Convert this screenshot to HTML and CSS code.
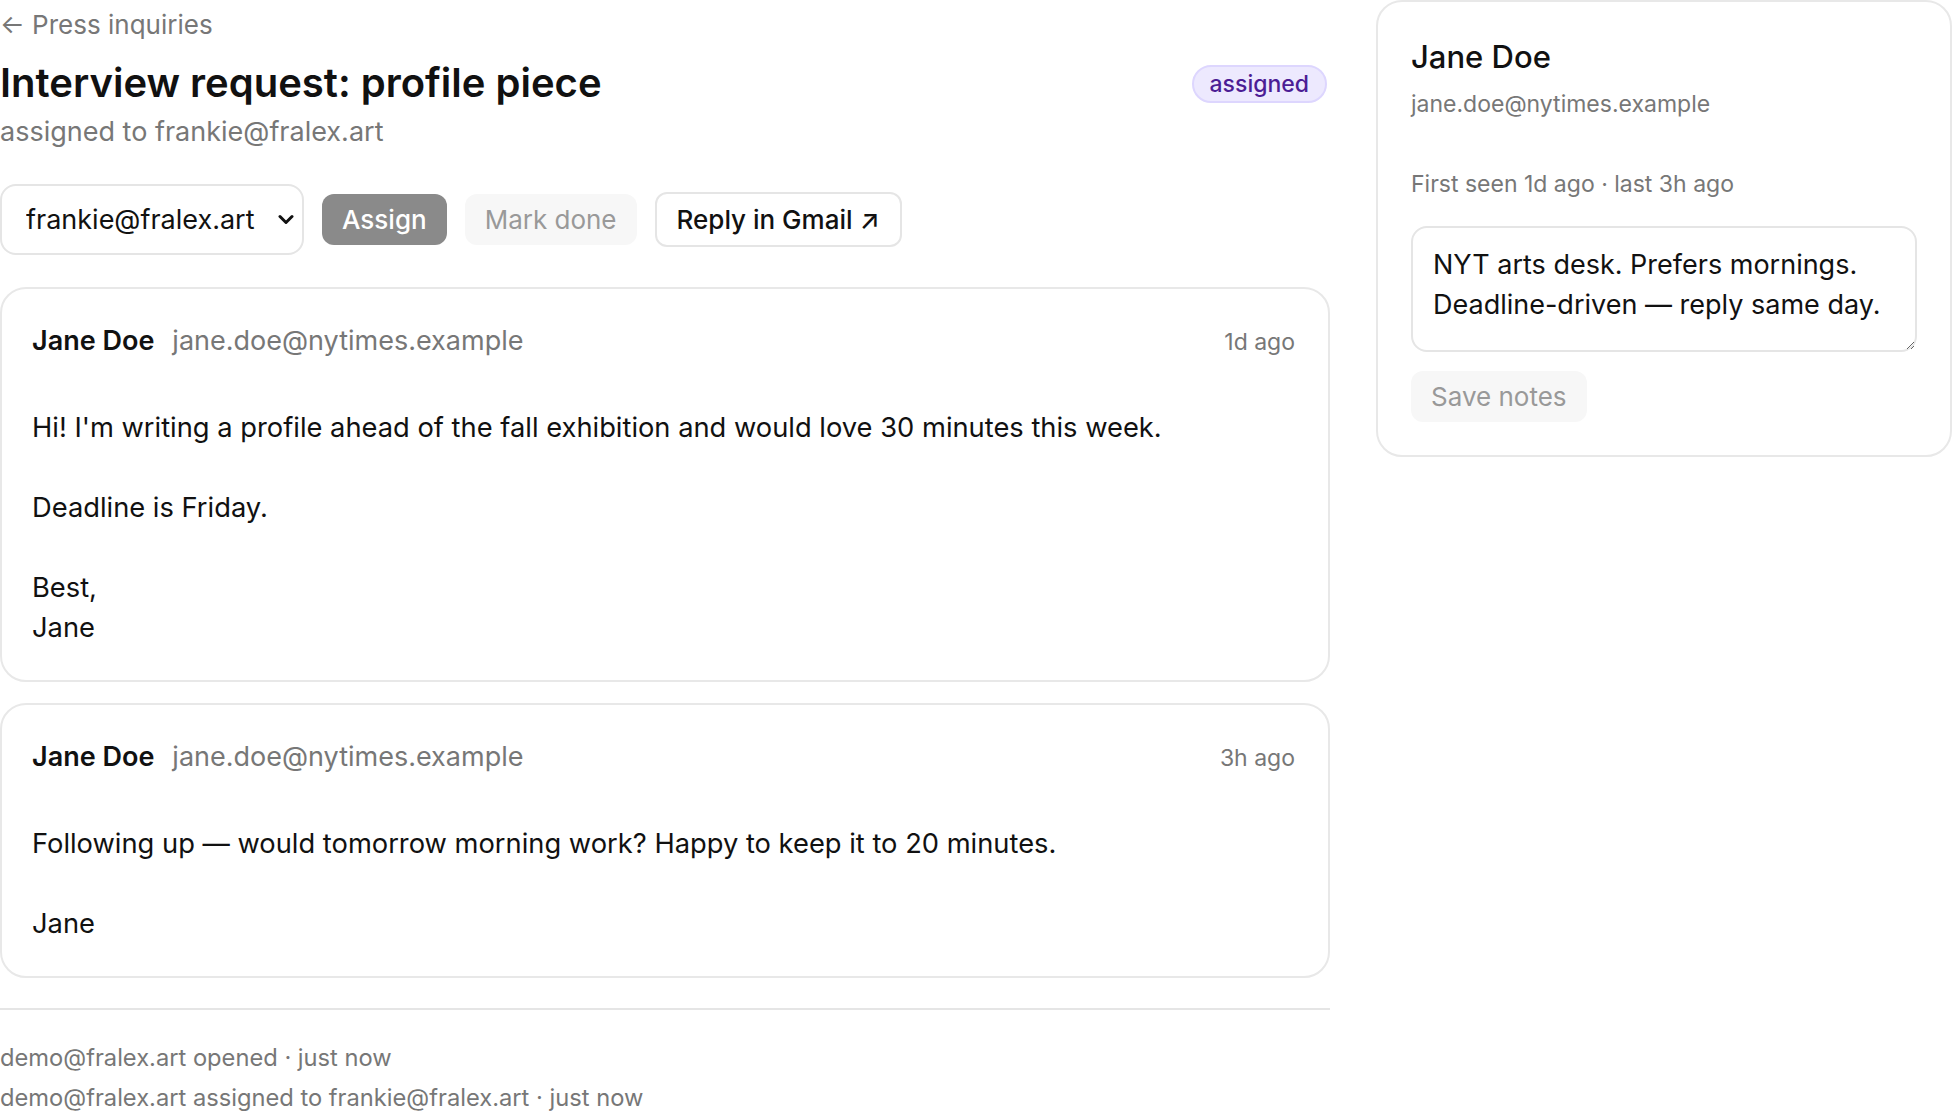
FILE: index.html
```html
<!DOCTYPE html>
<html lang="en">
<head>
    <meta charset="UTF-8">
    <meta name="viewport" content="width=device-width, initial-scale=1.0">
    <title>Interview request: profile piece</title>
    <link rel="stylesheet" href="styles.css">
</head>
<body>

    <div class="page">
        <div class="thread">
            <a class="back" href="#">← Press inquiries</a>

            <div class="thread-head">
                <div>
                    <h1>Interview request: profile piece</h1>
                    <p class="assignee">assigned to frankie@fralex.art</p>
                </div>
                <span class="badge">assigned</span>
            </div>

            <div class="actions">
                <div class="select-wrap">
                    <select class="assign-select">
                        <option>frankie@fralex.art</option>
                        <option>demo@fralex.art</option>
                    </select>
                    <svg class="chevron" width="16" height="11" viewBox="0 0 16 11">
                        <path d="M2 2.5l6 6 6-6" fill="none" stroke="#111" stroke-width="3" stroke-linecap="round" stroke-linejoin="round"/>
                    </svg>
                </div>
                <button class="btn btn-dark">Assign</button>
                <button class="btn btn-muted">Mark done</button>
                <button class="btn btn-outline">Reply in Gmail ↗</button>
            </div>

            <div class="message">
                <div class="message-head">
                    <span class="from-name">Jane Doe</span>
                    <span class="from-email">jane.doe@nytimes.example</span>
                    <span class="message-time">1d ago</span>
                </div>
                <div class="message-body">Hi! I'm writing a profile ahead of the fall exhibition and would love 30 minutes this week.

Deadline is Friday.

Best,
Jane</div>
            </div>

            <div class="message">
                <div class="message-head">
                    <span class="from-name">Jane Doe</span>
                    <span class="from-email">jane.doe@nytimes.example</span>
                    <span class="message-time">3h ago</span>
                </div>
                <div class="message-body">Following up — would tomorrow morning work? Happy to keep it to 20 minutes.

Jane</div>
            </div>

            <ul class="activity">
                <li>demo@fralex.art opened · just now</li>
                <li>demo@fralex.art assigned to frankie@fralex.art · just now</li>
            </ul>
        </div>

        <aside class="contact">
            <h2>Jane Doe</h2>
            <p class="contact-email">jane.doe@nytimes.example</p>
            <p class="contact-seen">First seen 1d ago · last 3h ago</p>
            <textarea class="notes">NYT arts desk. Prefers mornings.
Deadline-driven — reply same day.</textarea>
            <button class="btn btn-muted">Save notes</button>
        </aside>
    </div>

</body>
</html>
```

FILE: styles.css
```css
body {
    margin: 0;
    font-family: Inter, "Liberation Sans", sans-serif;
    color: #111;
    background: #fff;
}

.page {
    display: grid;
    grid-template-columns: 1330px 576px;
    gap: 46px;
    align-items: start;
}

.back {
    display: block;
    font-size: 26px;
    line-height: 50px;
    color: #777;
    text-decoration: none;
}

.thread-head {
    display: flex;
    justify-content: space-between;
    align-items: flex-start;
    margin-top: 8px;
    padding-right: 3px;
}

h1 {
    margin: 0;
    font-size: 40px;
    line-height: 50px;
    font-weight: 600;
}

.assignee {
    margin: 6px 0 0;
    font-size: 27px;
    line-height: 36px;
    color: #777;
}

.badge {
    margin-top: 7px;
    padding: 0 16px;
    height: 34px;
    line-height: 34px;
    border: 2px solid #ddd6fe;
    border-radius: 20px;
    background: #ede9fe;
    color: #4c1d95;
    font-size: 23px;
    font-weight: 500;
}

.actions {
    display: flex;
    align-items: center;
    gap: 18px;
    margin-top: 34px;
}

.select-wrap {
    position: relative;
}

.assign-select {
    display: block;
    width: 304px;
    height: 71px;
    padding: 0 40px 0 24px;
    border: 2px solid #e5e5e5;
    border-radius: 16px;
    background: #fff;
    font-family: inherit;
    font-size: 27px;
    color: #111;
    appearance: none;
    -webkit-appearance: none;
}

.chevron {
    position: absolute;
    right: 10px;
    top: 30px;
    pointer-events: none;
}

.btn {
    height: 51px;
    padding: 0 20px;
    border: 0;
    border-radius: 12px;
    font-family: inherit;
    font-size: 26px;
    cursor: pointer;
}

.btn-dark {
    background: #8a8a8a;
    color: #fff;
    font-weight: 500;
}

.btn-muted {
    background: #f7f7f7;
    color: #999;
}

.btn-outline {
    height: 55px;
    background: #fff;
    border: 2px solid #e5e5e5;
    color: #111;
    font-weight: 500;
}

.message {
    margin-top: 32px;
    padding: 32px 33px 32px 30px;
    border: 2px solid #e8e8e8;
    border-radius: 26px;
}

.message + .message {
    margin-top: 21px;
}

.message-head {
    display: flex;
    align-items: baseline;
    gap: 18px;
    line-height: 40px;
}

.from-name {
    font-size: 27px;
    font-weight: 600;
}

.from-email {
    font-size: 27px;
    color: #777;
}

.message-time {
    margin-left: auto;
    font-size: 23px;
    color: #777;
}

.message-body {
    margin-top: 46px;
    font-size: 27.3px;
    line-height: 40px;
    white-space: pre-line;
}

.activity {
    list-style-type: none;
    margin: 30px 0 0;
    padding: 28px 0 0;
    border-top: 2px solid #e5e5e5;
    font-size: 23.7px;
    line-height: 40px;
    color: #777;
}

.contact {
    padding: 33px;
    border: 2px solid #e8e8e8;
    border-radius: 26px;
}

.contact h2 {
    margin: 0;
    font-size: 31px;
    line-height: 44px;
    font-weight: 500;
}

.contact-email {
    margin: 8px 0 0;
    font-size: 23px;
    line-height: 34px;
    color: #777;
}

.contact-seen {
    margin: 46px 0 0;
    font-size: 23px;
    line-height: 34px;
    color: #777;
}

.notes {
    display: block;
    box-sizing: border-box;
    width: 100%;
    height: 126px;
    margin: 25px 0 19px;
    padding: 17px 20px;
    border: 2px solid #e5e5e5;
    border-radius: 16px;
    font-family: inherit;
    font-size: 27px;
    line-height: 40px;
    color: #111;
}
```
